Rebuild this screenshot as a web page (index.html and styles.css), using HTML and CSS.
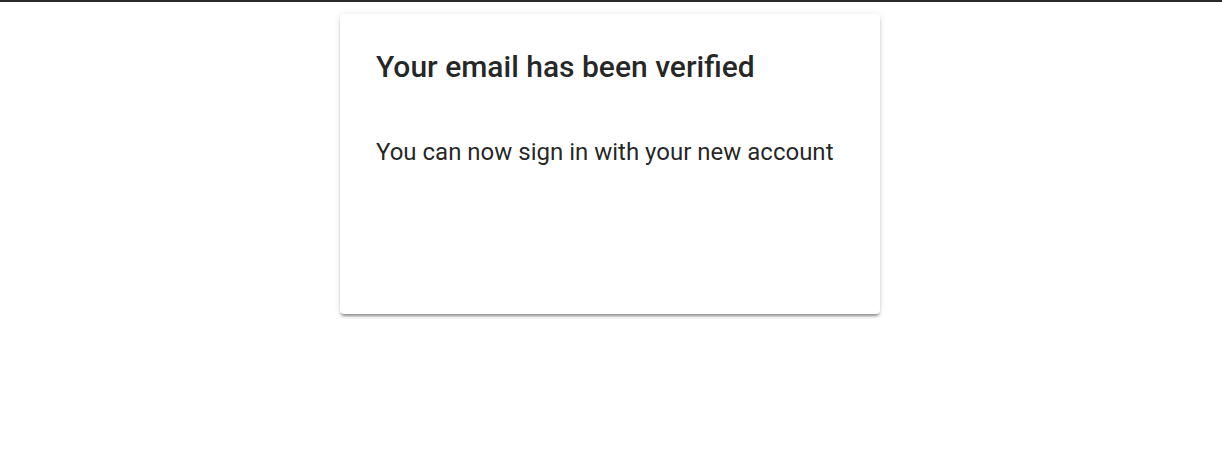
FILE: index.html
```html
<!DOCTYPE html>
<html lang="en">
<head>
<meta charset="utf-8">
<title>Email verified</title>
<link rel="stylesheet" href="styles.css">
</head>
<body>
<div class="topbar"></div>
<main class="page">
  <section class="card">
    <h1 class="card-title">Your email has been verified</h1>
    <p class="card-text">You can now sign in with your new account</p>
  </section>
</main>
</body>
</html>
```

FILE: styles.css
```css
html, body {
  margin: 0;
  padding: 0;
  background: #ffffff;
  font-family: Roboto, "Liberation Sans", Arial, sans-serif;
  color: rgba(0, 0, 0, 0.87);
}
body {
  min-height: 100vh;
}
.topbar {
  height: 2px;
  background: #2b2b2b;
}
.page {
  display: flex;
  justify-content: center;
  align-items: flex-start;
  padding: 12px 2px 40px 0;
}
.card {
  box-sizing: border-box;
  width: 540px;
  height: 300px;
  padding: 35px 36px;
  background: #fff;
  border-radius: 4px;
  box-shadow: 0 3px 3px -1px rgba(0,0,0,.4), 0 1px 6px rgba(0,0,0,.12);
}
.card-title {
  margin: 0;
  font-size: 30px;
  line-height: 36px;
  font-weight: 500;
}
.card-text {
  margin: 53px 0 0;
  font-size: 24px;
  line-height: 28px;
  font-weight: 400;
}
```
